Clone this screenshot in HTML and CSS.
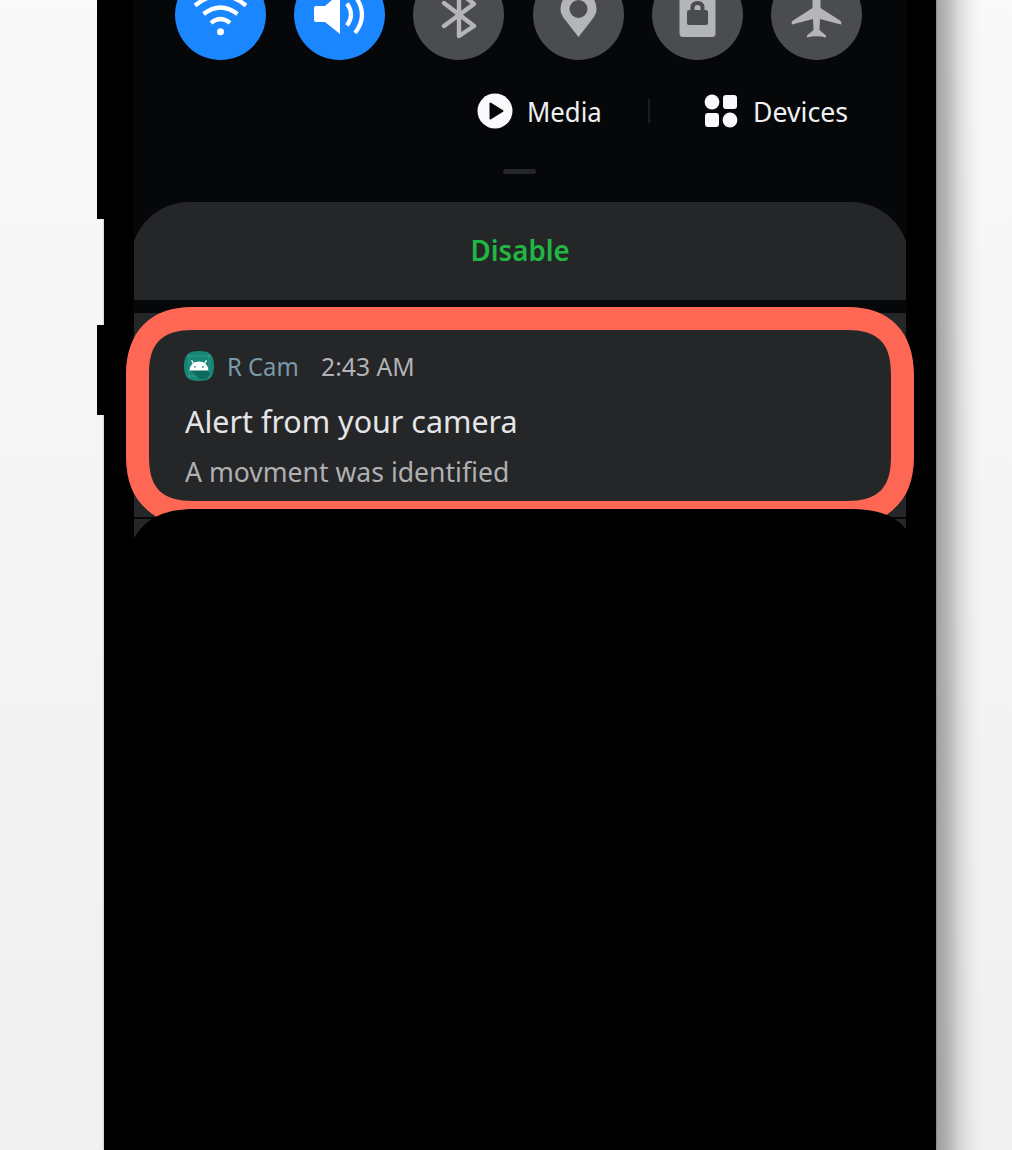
FILE: index.html
```html
<!DOCTYPE html>
<html lang="en">
<head>
<meta charset="utf-8">
<title>Camera alert</title>
<link rel="stylesheet" href="styles.css">
</head>
<body>
<main class="phone">
  <i class="side-button volume"></i>
  <i class="side-button power"></i>
  <div class="screen">
    <div class="toggles">
      <span class="toggle on"><svg viewBox="0 0 91 91"><g fill="none" stroke="#fff" stroke-width="4.200"><path d="M20 36.500Q45.500 16 71 36.500M28.500 45Q45.500 32 62.500 45M36 54Q45.500 46 55 54"/></g><circle cx="45.500" cy="62.700" r="3.500" fill="#fff"/></svg></span>
      <span class="toggle on"><svg viewBox="0 0 91 91"><path d="M22 37H31L46 24V65L31 53H22Q20 53 20 51V39Q20 37 22 37Z" fill="#fff"/><path d="M53 34.500Q61 45.500 53 56.500M61 27Q75 46 61 64" fill="none" stroke="#fff" stroke-width="4.200"/></svg></span>
      <span class="toggle"><svg viewBox="0 0 91 91"><path d="M31 57L61 35L46 23V67L61 57L31 34" fill="none" stroke="#b4b5b7" stroke-width="4.400" stroke-linejoin="round" stroke-linecap="round"/></svg></span>
      <span class="toggle"><svg viewBox="0 0 91 91"><path fill-rule="evenodd" d="M45.500 68L31.500 50Q27.500 45 27.500 40A18 18 0 0 1 63.500 40Q63.500 45 59.500 50ZM45.500 31A9 9 0 1 0 45.500 49A9 9 0 1 0 45.500 31Z" fill="#b4b5b7"/></svg></span>
      <span class="toggle"><svg viewBox="0 0 91 91"><rect x="27.500" y="22" width="36" height="46" rx="3.500" fill="#b4b5b7"/><rect x="35" y="41" width="21" height="15" rx="2" fill="#4b4c4e"/><path d="M40.500 43V38.500Q40.500 34 45.500 34Q50.500 34 50.500 38.500V43" fill="none" stroke="#4b4c4e" stroke-width="4"/></svg></span>
      <span class="toggle"><svg viewBox="0 0 91 91"><path d="M41.500 25Q42 21 45.500 21Q49 21 49.500 25V39L69 51.500Q71 53 70 55.500L49 50L48.500 61L55 66.500V68.500Q45.500 66 36 68.500V66.500L42.500 61L42 50L21 55.500Q20 53 22 51.500L41.500 39Z" fill="#b4b5b7"/></svg></span>
    </div>
    <div class="shortcuts">
      <svg class="media-icon" viewBox="0 0 36 36"><circle cx="18" cy="18" r="17.500" fill="#fafafc"/><path d="M13.500 10.500L25.500 18L13.500 25.500Z" fill="#060709" stroke="#060709" stroke-width="2" stroke-linejoin="round"/></svg>
      <span class="media-label">Media</span>
      <i class="divider"></i>
      <svg class="devices-icon" viewBox="0 0 34 34"><g fill="#fafafc"><circle cx="8" cy="8" r="7.400"/><rect x="19" y="1" width="14" height="14" rx="3"/><rect x="1" y="19" width="14" height="14" rx="3"/><circle cx="26" cy="26" r="7.400"/></g></svg>
      <span class="devices-label">Devices</span>
    </div>
    <i class="handle"></i>
    <section class="disable"><span class="disable-label">Disable</span></section>
    <section class="notification">
      <header class="source">
        <svg class="app-icon" viewBox="0 0 30 30"><path d="M15 0C26 0 30 4 30 15C30 26 26 30 15 30C4 30 0 26 0 15C0 4 4 0 15 0Z" fill="#168776"/><path d="M5 3V27M25 3V27M3 5H27M3 25H27" stroke="#46a596" stroke-width=".6"/><path d="M6 19L16 28H22L26 24L24 18Z" fill="#10695e"/><path d="M5.500 19.500Q6.500 10.500 15 10.500Q23.500 10.500 24.500 19.500Z" fill="#fff"/><path d="M9.500 12.500L7.500 9.300M20.500 12.500L22.500 9.300" stroke="#fff" stroke-width="1.400"/><circle cx="11" cy="15.800" r=".9" fill="#168776"/><circle cx="19" cy="15.800" r=".9" fill="#168776"/></svg>
        <span class="app-name">R Cam</span>
        <span class="time">2:43 AM</span>
      </header>
      <h1 class="title"><span class="title-text">Alert from your camera</span></h1>
      <p class="message"><span class="message-text">A movment was identified</span></p>
    </section>
    <div class="next-card"></div>
  </div>
  <svg class="overlay" viewBox="0 0 832 260">
    <path fill="#ff6755" fill-rule="evenodd" d="M88 7H744C786 7 810 32 810 75V156C810 187 799 206 776 219Q766 224 744 224H88Q66 224 56 219C33 206 22 187 22 156V75C22 32 46 7 88 7ZM89 30C58 30 45 43 45 74V157C45 188 58 201 89 201H743C774 201 787 188 787 157V74C787 43 774 30 743 30Z"/>
    <path d="M30 238C43 217 61 209 91 209H744C776 209 791 216 802 229V260H30Z"/>
  </svg>
</main>
</body>
</html>
```
FILE: styles.css
```css
* { box-sizing: border-box; }
body { margin: 0; height: 1150px; overflow: hidden; background: linear-gradient(#f9f9f9, #f6f6f6 30%, #f0f0f0); font-family: "Noto Sans", sans-serif; }
.phone { position: relative; width: 832px; height: 1150px; margin-left: 104px; padding: 0 30px; background: #000; box-shadow: 0 0 2px rgba(0,0,0,.35); }
.phone::after { content: ""; position: absolute; left: 832px; top: 0; width: 46px; height: 1150px; background: linear-gradient(90deg, rgba(0,0,0,.34), rgba(0,0,0,.27) 22%, rgba(0,0,0,.12) 50%, rgba(0,0,0,.035) 76%, transparent); }
.side-button { position: absolute; left: -7px; width: 8px; background: #000; }
.volume { top: 0; height: 219px; }
.power { top: 325px; height: 90px; }
.screen { height: 538px; background: #060709; overflow: hidden; display: flex; flex-direction: column; }
.toggles { display: flex; justify-content: space-between; height: 91px; margin: -31.5px 44px 0 41px; flex: none; }
.toggle { width: 91px; height: 91px; border-radius: 50%; background: #4b4c4e; }
.toggle.on { background: #1a86ff; }
.toggle svg { display: block; }
.shortcuts { display: flex; align-items: center; height: 40px; margin-top: 31.5px; padding-left: 343px; color: #f0f0f2; font-size: 27.5px; line-height: 42px; flex: none; }
.media-icon { width: 36px; height: 36px; flex: none; }
.media-label, .devices-label, .app-name, .time { white-space: nowrap; transform-origin: left; flex: none; }
.media-label { width: 73px; margin-left: 14px; padding-top: 1px; transform: scaleX(.935); }
.divider { width: 2px; height: 24px; margin-left: 48px; background: #1c1d1f; flex: none; }
.devices-icon { width: 34px; height: 34px; margin-left: 54px; flex: none; }
.devices-label { margin-left: 15px; padding-top: 1px; transform: scaleX(.97); }
.handle { width: 33px; height: 5px; margin: 38px 0 0 369px; border-radius: 3px; background: #252628; flex: none; }
.disable { height: 97.500px; margin: 28px -3px 0; border-radius: 58px 58px 0 0; background: #252628; color: #21b644; font-size: 28.5px; font-weight: 600; line-height: 97px; text-align: center; flex: none; }
.disable-label { display: inline-block; transform: scaleX(.97); }
.notification { height: 204.500px; margin-top: 13px; padding: 36px 0 0 50px; background: #252628; flex: none; }
.source { display: flex; align-items: center; height: 34px; font-size: 25.5px; line-height: 34px; }
.app-icon { width: 30px; height: 30px; }
.app-name { width: 72px; margin-left: 13px; color: #7999aa; transform: scaleX(.935); }
.time { margin-left: 22px; color: #b2b3b5; transform: scaleX(.97); }
.title { height: 46px; margin: 15px 0 0 1px; color: #e5e5e7; font-size: 31.5px; font-weight: 400; line-height: 46px; }
.title-text, .message-text { display: inline-block; white-space: nowrap; transform: scaleX(.966); transform-origin: left; }
.message { height: 40px; margin: 8px 0 0 1px; color: #afb0b2; font-size: 27.5px; line-height: 40px; }
.next-card { height: 30px; margin-top: 2px; background: #252628; flex: none; }
.overlay { position: absolute; left: 0; top: 300px; width: 832px; height: 260px; }
```
